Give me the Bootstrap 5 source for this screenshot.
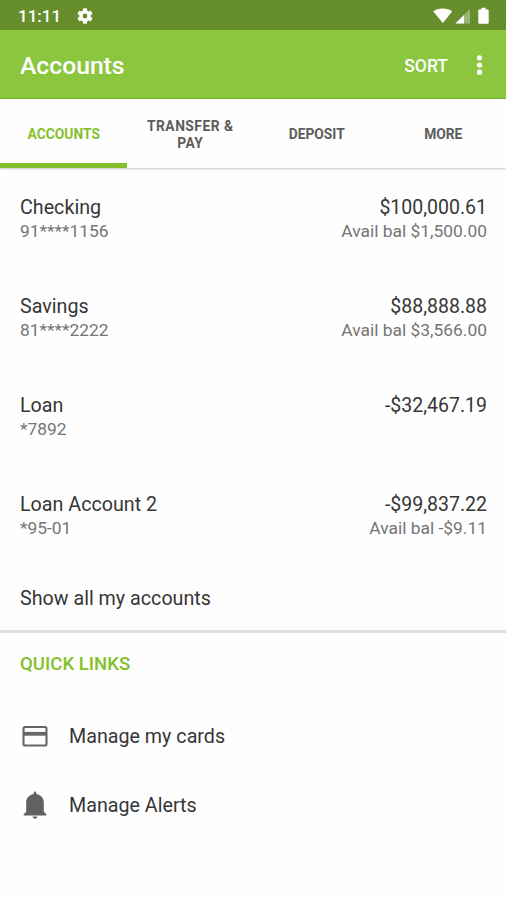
<!DOCTYPE html>
<html lang="en">
<head>
<meta charset="utf-8">
<meta name="viewport" content="width=device-width, initial-scale=1">
<title>Accounts</title>
<link href="https://cdn.jsdelivr.net/npm/bootstrap@5.3.0/dist/css/bootstrap.min.css" rel="stylesheet">
<style>
  body { font-family: Roboto, sans-serif; color: #363636; background: #fefefe; min-height: 900px; overflow: hidden; }
  .fw-mid { font-weight: 500; }
  .status-bar { height: 30px; background: #668e2d; padding: 1px 16px 0 18px; font-size: 17px; line-height: 28px; }
  .app-bar { height: 69px; background: #8cc63f; border-bottom: 1px solid #7fb82c; padding: 3px 20px 0; }
  .app-title { font-size: 24.7px; line-height: 30px; }
  .sort-btn { font-size: 17.5px; line-height: 24px; }
  .tab-bar { height: 69px; box-shadow: 0 1px 2px rgba(0,0,0,.22); background: #fefefe; }
  .tab-bar .nav-link { height: 69px; font-size: 13.8px; line-height: 17px; font-weight: 700; color: #5c5c5c; padding: 2px 15px 0 16px; }
  .tab-bar .nav-link.active { color: #84c02c; border-bottom: 5px solid #84c02c; padding-top: 7px; }
  .tab-bar .tab-wide { letter-spacing: .5px; }
  .account { height: 99px; padding: 28px 19px 0 20px; }
  .line-main { font-size: 19.7px; line-height: 25px; }
  .account .line-main { line-height: 24px; }
  .account .text-end .line-main { font-size: 19.5px; }
  .line-sub { font-size: 17.4px; line-height: 22px; color: #757575; }
  .show-all { height: 69px; padding: 22px 20px 0; border-bottom: 3px solid #dedede; }
  .links-title { font-size: 18.6px; line-height: 24px; font-weight: 500; color: #84c02c; padding: 19px 20px 0; }
  .quick-link { height: 69px; padding: 0 20px; gap: 19px; }
  .links-list { padding-top: 26px; }
</style>
<script src="https://cdn.jsdelivr.net/npm/bootstrap@5.3.0/dist/js/bootstrap.bundle.min.js"></script>
</head>
<body>
<div class="status-bar d-flex align-items-center justify-content-between text-white fw-mid">
  <div class="d-flex align-items-center">
    <span>11:11</span>
    <svg class="ms-3" width="16" height="16" viewBox="2 2 20 20" fill="#fff"><path d="M19.14 12.94c.04-.3.06-.61.06-.94 0-.32-.02-.64-.07-.94l2.03-1.58a.49.49 0 0 0 .12-.61l-1.92-3.32a.49.49 0 0 0-.59-.22l-2.39.96c-.5-.38-1.03-.7-1.62-.94l-.36-2.54a.48.48 0 0 0-.48-.41h-3.84a.47.47 0 0 0-.47.41l-.36 2.54c-.59.24-1.13.57-1.62.94l-2.39-.96a.48.48 0 0 0-.59.22L2.74 8.87a.48.48 0 0 0 .12.61l2.03 1.58c-.05.3-.09.63-.09.94s.02.64.07.94l-2.03 1.58a.49.49 0 0 0-.12.61l1.92 3.32c.12.22.37.29.59.22l2.39-.96c.5.38 1.03.7 1.62.94l.36 2.54c.05.24.24.41.48.41h3.84c.24 0 .44-.17.47-.41l.36-2.54c.59-.24 1.13-.56 1.62-.94l2.39.96c.22.08.47 0 .59-.22l1.92-3.32a.47.47 0 0 0-.12-.61zM12 15a3 3 0 1 1 0-6 3 3 0 0 1 0 6z"/></svg>
  </div>
  <svg width="58" height="18" viewBox="0 0 58 18" fill="#fff">
    <path d="M1.300 4.400C6.500.6 15 .6 20.200 4.400L10.800 16z"/>
    <path d="M38 2V16.500H23.500z" opacity=".35"/>
    <path d="M32 8V16.500H23.500z"/>
    <path d="M47.300 2.500h2V.8h4.400v1.700h2q1 0 1 1v12.300q0 1-1 1h-8.400q-1 0-1-1V3.500q0-1 1-1z"/>
  </svg>
</div>
<header class="app-bar d-flex align-items-center justify-content-between text-white fw-mid">
  <div class="app-title">Accounts</div>
  <div class="d-flex align-items-center">
    <span class="sort-btn">SORT</span>
    <svg class="ms-4" width="14" height="22" viewBox="0 0 14 22" fill="#fff"><circle cx="7.5" cy="2.800" r="2.600"/><circle cx="7.5" cy="10" r="2.600"/><circle cx="7.5" cy="17.200" r="2.600"/></svg>
  </div>
</header>
<nav class="nav nav-fill tab-bar row g-0 text-center">
  <a class="col-3 nav-link active d-flex align-items-center justify-content-center" href="#">ACCOUNTS</a>
  <a class="col-3 nav-link tab-wide d-flex align-items-center justify-content-center" href="#">TRANSFER &amp; PAY</a>
  <a class="col-3 nav-link d-flex align-items-center justify-content-center" href="#">DEPOSIT</a>
  <a class="col-3 nav-link d-flex align-items-center justify-content-center" href="#">MORE</a>
</nav>
<main>
  <div class="account d-flex justify-content-between">
    <div><div class="line-main">Checking</div><div class="line-sub">91****1156</div></div>
    <div class="text-end"><div class="line-main">$100,000.61</div><div class="line-sub">Avail bal $1,500.00</div></div>
  </div>
  <div class="account d-flex justify-content-between">
    <div><div class="line-main">Savings</div><div class="line-sub">81****2222</div></div>
    <div class="text-end"><div class="line-main">$88,888.88</div><div class="line-sub">Avail bal $3,566.00</div></div>
  </div>
  <div class="account d-flex justify-content-between">
    <div><div class="line-main">Loan</div><div class="line-sub">*7892</div></div>
    <div class="text-end"><div class="line-main">-$32,467.19</div></div>
  </div>
  <div class="account d-flex justify-content-between">
    <div><div class="line-main">Loan Account 2</div><div class="line-sub">*95-01</div></div>
    <div class="text-end"><div class="line-main">-$99,837.22</div><div class="line-sub">Avail bal -$9.11</div></div>
  </div>
  <div class="show-all line-main">Show all my accounts</div>
  <div class="links-title">QUICK LINKS</div>
  <div class="links-list">
    <div class="quick-link line-main d-flex align-items-center">
      <svg width="30" height="30" viewBox="0 0 30 30" fill="none" stroke="#666"><rect x="3.500" y="5" width="23" height="18.500" rx="1.500" stroke-width="2.100"/><path d="M3.500 11.800h23" stroke-width="3.800"/></svg>
      <span>Manage my cards</span>
    </div>
    <div class="quick-link line-main d-flex align-items-center">
      <svg width="30" height="30" viewBox="0 0 30 30" fill="#616161"><path d="M15 .2q1 .2 1.600 2.800c4.400 1.200 7.200 4.300 7.200 8.500v9.300l2.500 2.500v1.200H3.700v-1.200l2.500-2.500v-9.300c0-4.200 2.800-7.300 7.200-8.500Q14 .4 15 .2zM12.500 25.600h5q-.5 2.200-2.500 2.200t-2.500-2.200z"/></svg>
      <span>Manage Alerts</span>
    </div>
  </div>
</main>
</body>
</html>
